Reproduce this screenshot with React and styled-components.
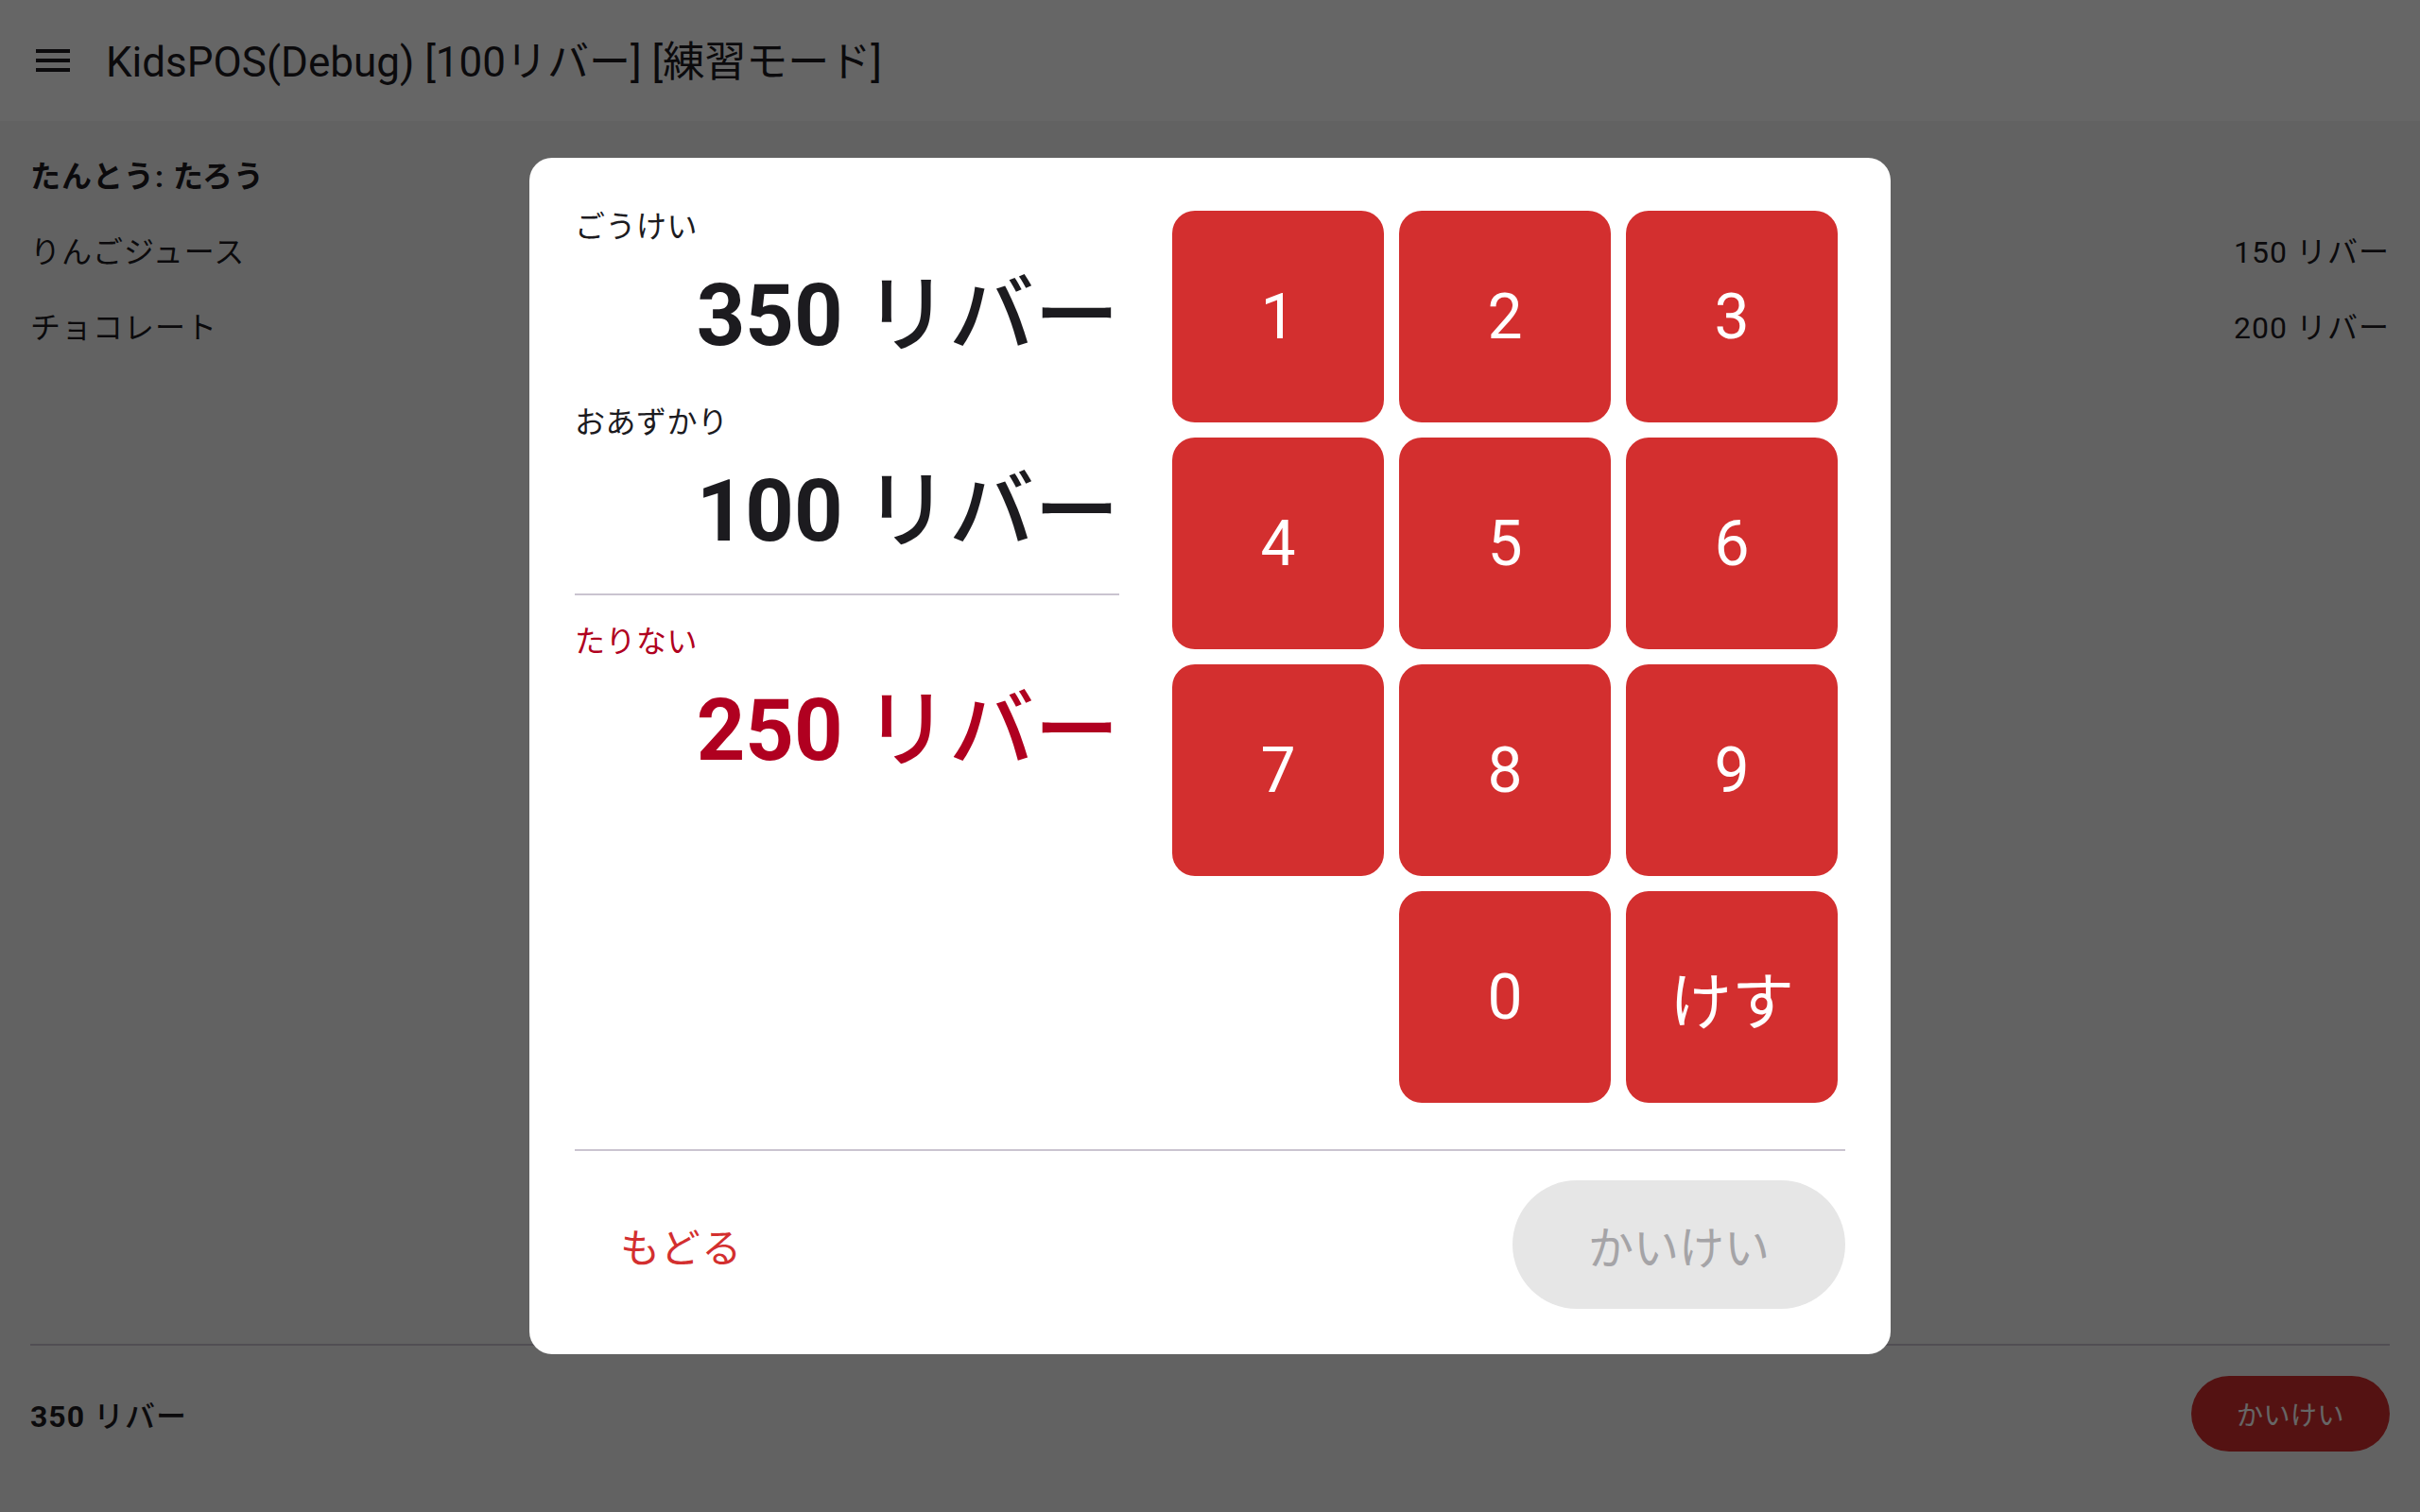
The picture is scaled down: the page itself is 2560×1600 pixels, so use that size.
import React from "react";
import styled, { createGlobalStyle } from "styled-components";

const GlobalStyle = createGlobalStyle`
  html, body {
    margin: 0;
    padding: 0;
  }
  body {
    font-family: Roboto, "Noto Sans CJK JP", sans-serif;
    background: #f6f6f6;
    color: #1c1b1f;
  }
  * {
    box-sizing: border-box;
  }
`;

const items = [
    { name: "りんごジュース", price: 150 },
    { name: "チョコレート", price: 200 },
];

const keys = ["1", "2", "3", "4", "5", "6", "7", "8", "9", "0", "けす"];

function MenuIcon() {
    return (
        <svg width="48" height="48" viewBox="0 0 24 24" fill="#1c1b1f">
            <path d="M3 18h18v-2H3v2zm0-5h18v-2H3v2zm0-7v2h18V6H3z" />
        </svg>
    );
}

function App() {
    return (
        <>
            <GlobalStyle />
            <Page>
                <AppBar>
                    <MenuButton>
                        <MenuIcon />
                    </MenuButton>
                    <Title>KidsPOS(Debug) [100リバー] [練習モード]</Title>
                </AppBar>
                <Body>
                    <Row $bold>たんとう: たろう</Row>
                    {items.map((item) => (
                        <Row key={item.name}>
                            <span>{item.name}</span>
                            <span>{item.price} リバー</span>
                        </Row>
                    ))}
                </Body>
                <Divider />
                <Footer>
                    <Total>
                        <b>350</b> リバー
                    </Total>
                    <CheckoutButton>かいけい</CheckoutButton>
                </Footer>
            </Page>

            <Scrim>
                <Dialog>
                    <DialogBody>
                        <Summary>
                            <Label>ごうけい</Label>
                            <Amount $gap>
                                <b>350</b> リバー
                            </Amount>
                            <Label>おあずかり</Label>
                            <Amount>
                                <b>100</b> リバー
                            </Amount>
                            <SummaryDivider />
                            <Label $error>たりない</Label>
                            <Amount $error>
                                <b>250</b> リバー
                            </Amount>
                        </Summary>
                        <Keypad>
                            {keys.map((key) => (
                                <Key key={key} $shift={key === "0"}>
                                    {key}
                                </Key>
                            ))}
                        </Keypad>
                    </DialogBody>
                    <DialogDivider />
                    <DialogActions>
                        <BackButton>もどる</BackButton>
                        <PayButton disabled>かいけい</PayButton>
                    </DialogActions>
                </Dialog>
            </Scrim>
        </>
    );
}

export default App;

const Page = styled.div`
    display: flex;
    flex-direction: column;
    height: 100vh;
`;

const AppBar = styled.header`
    height: 128px;
    flex-shrink: 0;
    display: flex;
    align-items: center;
    gap: 32px;
    padding-left: 32px;
    background: #ffffff;
`;

const MenuButton = styled.div`
    width: 48px;
    height: 48px;
    display: flex;
    align-items: center;
    justify-content: center;
`;

const Title = styled.h1`
    margin: 4px 0 0;
    font-size: 44px;
    font-weight: 400;
    line-height: 56px;
`;

const Body = styled.main`
    flex: 1;
    padding: 16px 32px 0;
`;

const Row = styled.div`
    display: flex;
    justify-content: space-between;
    align-items: center;
    height: 80px;
    font-size: 32px;
    letter-spacing: 1px;
    font-weight: ${(p) => (p.$bold ? 700 : 400)};
`;

const Divider = styled.hr`
    margin: 0 32px;
    border: none;
    height: 2px;
    background: #cac4d0;
    flex-shrink: 0;
`;

const Footer = styled.footer`
    display: flex;
    align-items: center;
    justify-content: space-between;
    padding: 32px 32px 64px;
    flex-shrink: 0;
`;

const Total = styled.div`
    font-size: 32px;
    font-weight: 500;
    letter-spacing: 1px;

    b {
        font-weight: 700;
    }
`;

const CheckoutButton = styled.button`
    height: 80px;
    padding: 0 48px;
    border: none;
    border-radius: 40px;
    background: #d32f2f;
    color: #ffffff;
    font-family: inherit;
    font-size: 28px;
    letter-spacing: 0.5px;
`;

const Scrim = styled.div`
    position: fixed;
    inset: 0;
    background: rgba(0, 0, 0, 0.6);
    display: flex;
    align-items: center;
    justify-content: center;
`;

const Dialog = styled.div`
    width: 1440px;
    padding: 48px;
    background: #ffffff;
    border-radius: 24px;
`;

const DialogBody = styled.div`
    display: flex;
    gap: 48px;
`;

const Summary = styled.div`
    width: 576px;
    display: flex;
    flex-direction: column;
`;

const Label = styled.div`
    font-size: 32px;
    line-height: 50px;
    letter-spacing: 0.5px;
    color: ${(p) => (p.$error ? "#b00020" : "#1c1b1f")};
`;

const Amount = styled.div`
    font-size: 90px;
    line-height: 140px;
    font-weight: 500;
    text-align: right;
    white-space: nowrap;
    margin-bottom: ${(p) => (p.$gap ? "17px" : "0")};
    color: ${(p) => (p.$error ? "#b00020" : "#1c1b1f")};

    b {
        font-weight: 700;
    }
`;

const SummaryDivider = styled.div`
    height: 2px;
    background: #cac4d0;
    margin: 16px 0 24px;
`;

const Keypad = styled.div`
    display: grid;
    grid-template-columns: repeat(3, 224px);
    grid-auto-rows: 224px;
    gap: 16px;
    padding: 8px;
`;

const Key = styled.button`
    grid-column-start: ${(p) => (p.$shift ? 2 : "auto")};
    border: none;
    border-radius: 24px;
    background: #d32f2f;
    color: #ffffff;
    font-family: inherit;
    font-size: 66px;
    font-weight: 400;
    display: flex;
    align-items: center;
    justify-content: center;
    padding: 0;
`;

const DialogDivider = styled.div`
    height: 2px;
    background: #cac4d0;
    margin-top: 41px;
`;

const DialogActions = styled.div`
    display: flex;
    align-items: center;
    justify-content: space-between;
    margin-top: 31px;
`;

const BackButton = styled.button`
    height: 136px;
    padding: 0 48px;
    border: none;
    border-radius: 68px;
    background: transparent;
    color: #d32f2f;
    font-family: inherit;
    font-size: 42px;
    letter-spacing: 1.5px;
`;

const PayButton = styled.button`
    height: 136px;
    padding: 0 80px;
    border: none;
    border-radius: 68px;
    background: #e6e6e6;
    color: #a5a4a7;
    font-family: inherit;
    font-size: 48px;
`;
